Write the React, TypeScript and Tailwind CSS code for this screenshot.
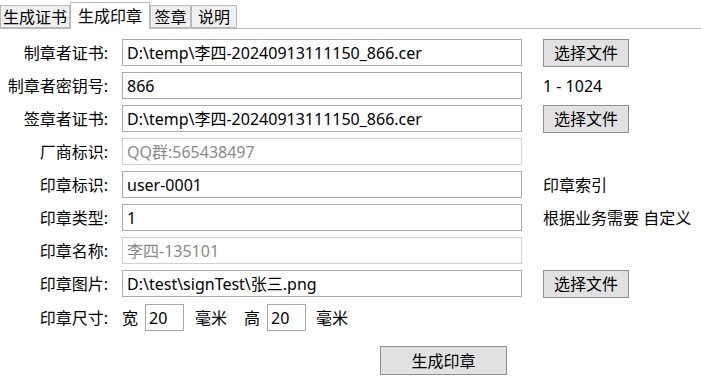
import React from "react";

const font = {
  fontFamily: '"Noto Sans", "Noto Sans CJK SC", sans-serif',
};

type Row = {
  label: string;
  value: string;
  disabled?: boolean;
  side?: "file" | string;
};

const ROWS: Row[] = [
  { label: "制章者证书:", value: "D:\\temp\\李四-20240913111150_866.cer", side: "file" },
  { label: "制章者密钥号:", value: "866", side: "1 - 1024" },
  { label: "签章者证书:", value: "D:\\temp\\李四-20240913111150_866.cer", side: "file" },
  { label: "厂商标识:", value: "QQ群:565438497", disabled: true },
  { label: "印章标识:", value: "user-0001", side: "印章索引" },
  { label: "印章类型:", value: "1", side: "根据业务需要 自定义" },
  { label: "印章名称:", value: "李四-135101", disabled: true },
  { label: "印章图片:", value: "D:\\test\\signTest\\张三.png", side: "file" },
];

function WinButton({ children, className }: { children: React.ReactNode; className: string }) {
  return (
    <button
      className={
        "border bg-[#e1e1e1] text-[16px] text-black leading-none flex items-center justify-center " +
        className
      }
    >
      {children}
    </button>
  );
}

function Tab({ label, active, w }: { label: string; active?: boolean; w: string }) {
  if (active) {
    return (
      <div
        className={
          "h-[27px] -mb-px bg-white border border-b-0 border-[#b9b9b9] flex items-center justify-center text-[16px] " +
          w
        }
      >
        {label}
      </div>
    );
  }
  return (
    <div
      className={
        "h-[23px] mt-[4px] bg-[#f0f0f0] border border-[#b9b9b9] flex items-center justify-center text-[16px] " +
        w
      }
    >
      {label}
    </div>
  );
}

export default function App() {
  return (
    <div className="w-[701px] h-[385px] bg-white text-black overflow-hidden" style={font}>
      <div className="flex items-end h-[29px] border-b border-[#b9b9b9] pt-[1px]">
        <Tab label="生成证书" w="w-[70px]" />
        <Tab label="生成印章" active w="w-[80px]" />
        <Tab label="签章" w="w-[41px]" />
        <Tab label="说明" w="w-[46px]" />
      </div>

      <div className="pt-[10px] flex flex-col gap-[6px]">
        {ROWS.map((r) => (
          <div key={r.label} className="flex items-center h-[27px]">
            <div className="w-[108px] text-right text-[16px] whitespace-nowrap">{r.label}</div>
            <div
              className={
                "ml-[14px] w-[400px] h-[27px] border bg-white flex items-center px-[4px] text-[16px] whitespace-nowrap " +
                (r.disabled ? "border-[#d0d0d0] text-[#8a8a8a]" : "border-[#a9a9a9]")
              }
            >
              {r.value}
            </div>
            {r.side === "file" ? (
              <WinButton className="ml-[21px] w-[86px] h-[28px] border-[#8f8f8f]">选择文件</WinButton>
            ) : r.side ? (
              <div className="ml-[21px] text-[16px] whitespace-nowrap">{r.side}</div>
            ) : null}
          </div>
        ))}

        <div className="flex items-center h-[27px] mt-[1px] text-[16px]">
          <div className="w-[108px] text-right">印章尺寸:</div>
          <span className="ml-[14px]">宽</span>
          <div className="ml-[7px] w-[39px] h-[27px] border border-[#a9a9a9] flex items-center px-[3px]">20</div>
          <span className="ml-[11px]">毫米</span>
          <span className="ml-[17px]">高</span>
          <div className="ml-[7px] w-[39px] h-[27px] border border-[#a9a9a9] flex items-center px-[3px]">20</div>
          <span className="ml-[10px]">毫米</span>
        </div>

        <div className="flex mt-[9px]">
          <WinButton className="ml-[380px] w-[127px] h-[29px] border-[#8f8f8f]">生成印章</WinButton>
        </div>
      </div>
    </div>
  );
}
